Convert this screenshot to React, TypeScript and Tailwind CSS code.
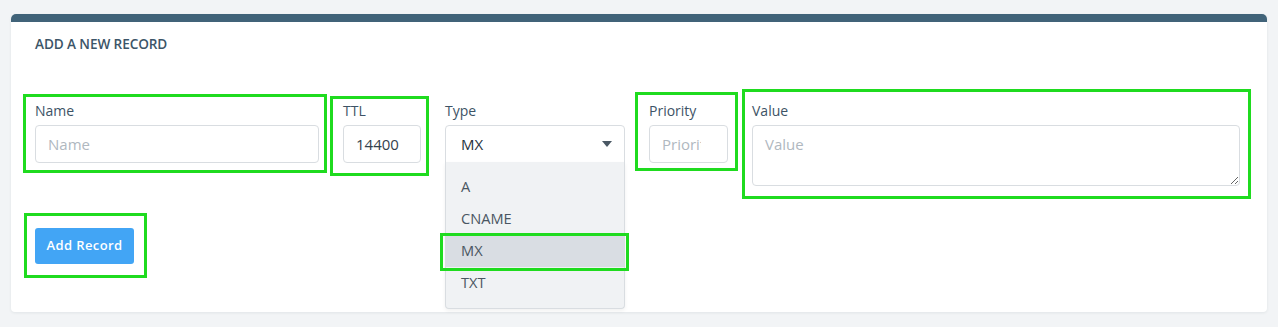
import { useState } from 'react';

const font = { fontFamily: '"Open Sans", "Liberation Sans", sans-serif' };

// green annotation frame laid over a field
function Mark({ className }: { className: string }) {
  return <div className={`pointer-events-none absolute border-[3px] border-[#1fdb1f] ${className}`} />;
}

const inputCls =
  'mt-[4px] h-[38px] w-full rounded-[4px] border border-[#d9dde1] pl-[12px] text-[15px] text-[#33414d] outline-none placeholder:text-[#b0b8bf]';

export default function App() {
  const [type, setType] = useState('MX');
  const options = ['A', 'CNAME', 'MX', 'TXT'];

  return (
    <div className="min-h-[327px] w-[1278px] bg-[#f2f4f6] pl-[11px] pt-[14px]" style={font}>
      <div className="w-[1256px] rounded-t-[5px] rounded-b-[4px] bg-white shadow-[0_1px_3px_rgba(30,50,70,0.08)]">
        <div className="h-[8px] rounded-t-[5px] bg-[#416379]" />
        <div className="px-[24px] pb-[48px] pt-[12px]">
          <h2 className="text-[13.6px] font-semibold uppercase leading-[20px] tracking-[-0.1px] text-[#3c5568]">
            Add a new record
          </h2>

          <div className="mt-[47px] flex items-start gap-[24px]">
            <div className="relative w-[284px]">
              <Mark className="-left-[12px] -right-[8px] -top-[7px] -bottom-[10px]" />
              <label className="block text-[14px] leading-[20px] text-[#3d5366]">Name</label>
              <input placeholder="Name" className={`${inputCls} pr-[12px]`} />
            </div>

            <div className="relative w-[78px]">
              <Mark className="-left-[13px] -right-[8px] -top-[5px] -bottom-[13px]" />
              <label className="block text-[14px] leading-[20px] text-[#3d5366]">TTL</label>
              <input defaultValue="14400" className={`${inputCls} pr-[8px]`} />
            </div>

            <div className="relative w-[180px]">
              <label className="block text-[14px] leading-[20px] text-[#3d5366]">Type</label>
              <div className="mt-[4px] flex h-[38px] w-full items-center justify-between rounded-t-[4px] border border-[#d9dde1] pl-[15px] pr-[12px] text-[15px] text-[#27333d]">
                <span>{type}</span>
                <svg width="10" height="6" viewBox="0 0 10 6">
                  <path d="M0 0h10L5 6z" fill="#4a5864" />
                </svg>
              </div>
              <div className="absolute left-0 right-0 top-[61px] z-10 rounded-b-[4px] border border-t-0 border-[#d9dde1] bg-[#f0f2f4] py-[9px] shadow-[0_2px_4px_rgba(0,0,0,0.06)]">
                {options.map((o) => (
                  <div
                    key={o}
                    onClick={() => setType(o)}
                    className={`relative flex h-[32px] items-center pl-[15px] text-[14.6px] text-[#4a5662] ${
                      o === 'MX' ? 'bg-[#d9dde3]' : ''
                    }`}
                  >
                    {o}
                    {o === 'MX' && <Mark className="-left-[6px] -right-[5px] -top-[2px] -bottom-[4px]" />}
                  </div>
                ))}
              </div>
            </div>

            <div className="relative w-[79px]">
              <Mark className="-left-[14px] -right-[10px] -top-[9px] -bottom-[8px]" />
              <label className="block text-[14px] leading-[20px] text-[#3d5366]">Priority</label>
              <input placeholder="Priority" className={`${inputCls} pr-[26px]`} />
            </div>

            <div className="relative w-[488px]">
              <Mark className="-left-[10px] -right-[11px] -top-[12px] -bottom-[13px]" />
              <label className="block text-[14px] leading-[20px] text-[#3d5366]">Value</label>
              <textarea
                placeholder="Value"
                className="mt-[4px] block h-[61px] w-full rounded-[4px] border border-[#d9dde1] px-[12px] py-[7px] text-[15px] text-[#33414d] outline-none placeholder:text-[#b0b8bf]"
              />
            </div>
          </div>

          <div className="mt-[42px]">
            <div className="relative inline-block">
              <Mark className="-left-[11px] -right-[13px] -top-[15px] -bottom-[14px]" />
              <button className="h-[36px] w-[99px] rounded-[3px] bg-[#42a5f5] text-[13px] font-semibold tracking-[0.4px] text-white">
                Add Record
              </button>
            </div>
          </div>
        </div>
      </div>
    </div>
  );
}
